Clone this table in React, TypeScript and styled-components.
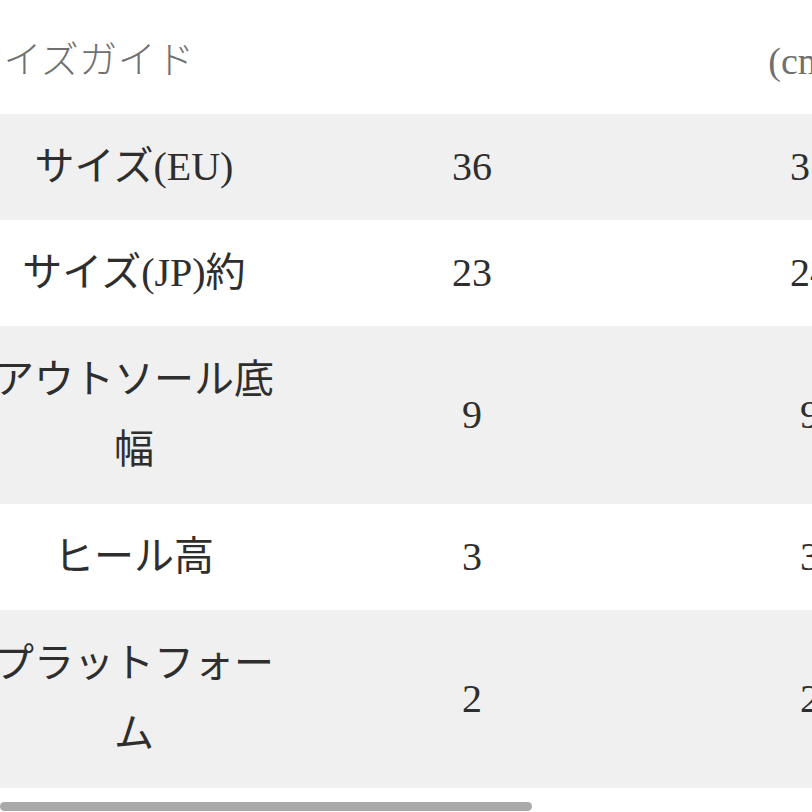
import React from "react";
import styled, { createGlobalStyle } from "styled-components";

const Global = createGlobalStyle`
  html, body { margin: 0; padding: 0; background: #ffffff; }
  body { width: 812px; height: 812px; overflow: hidden; }
`;

const Page = styled.div`
  width: 812px;
  height: 812px;
  overflow: hidden;
  background: #ffffff;
  font-family: "Liberation Serif", "Noto Sans CJK JP", serif;
`;

const Scroller = styled.div`
  margin-left: -35px;
  width: 1014px;
`;

const Header = styled.div`
  width: 875px;
  height: 114px;
  display: flex;
  align-items: center;
  justify-content: space-between;
  color: #707070;
`;

const Title = styled.span`
  font-family: "Noto Sans CJK JP", sans-serif;
  font-weight: 300;
  font-size: 38px;
  letter-spacing: 0.5px;
  margin-top: -2px;
`;

const Unit = styled.span`
  font-family: "Liberation Serif", serif;
  font-size: 38px;
  margin-top: 8px;
`;

const Row = styled.div<{ $shade: boolean; $tall?: boolean }>`
  display: grid;
  grid-template-columns: repeat(3, 338px);
  align-items: center;
  background: ${(p) => (p.$shade ? "#f0f0f0" : "#ffffff")};
  padding: ${(p) => (p.$tall ? "19px 0" : "18px 0")};
`;

const Cell = styled.div`
  text-align: center;
  font-size: 40px;
  line-height: 70px;
  color: #2e2e2e;
  padding: 0 22px;
  font-family: "Liberation Serif", "Noto Sans CJK JP", serif;
`;

const ScrollThumb = styled.div`
  margin-top: 14px;
  width: 532px;
  height: 9px;
  border-radius: 5px;
  background: #a9a9a9;
`;

const rows: { label: string; values: string[]; tall?: boolean }[] = [
  { label: "サイズ(EU)", values: ["36", "37"] },
  { label: "サイズ(JP)約", values: ["23", "24"] },
  { label: "アウトソール底幅", values: ["9", "9"], tall: true },
  { label: "ヒール高", values: ["3", "3"] },
  { label: "プラットフォーム", values: ["2", "2"], tall: true },
];

export default function App() {
  return (
    <Page>
      <Global />
      <Scroller>
        <Header>
          <Title>サイズガイド</Title>
          <Unit>(cm)</Unit>
        </Header>
        {rows.map((r, i) => (
          <Row key={r.label} $shade={i % 2 === 0} $tall={r.tall}>
            <Cell>{r.label}</Cell>
            {r.values.map((v, j) => (
              <Cell key={j}>{v}</Cell>
            ))}
          </Row>
        ))}
      </Scroller>
      <ScrollThumb />
    </Page>
  );
}
